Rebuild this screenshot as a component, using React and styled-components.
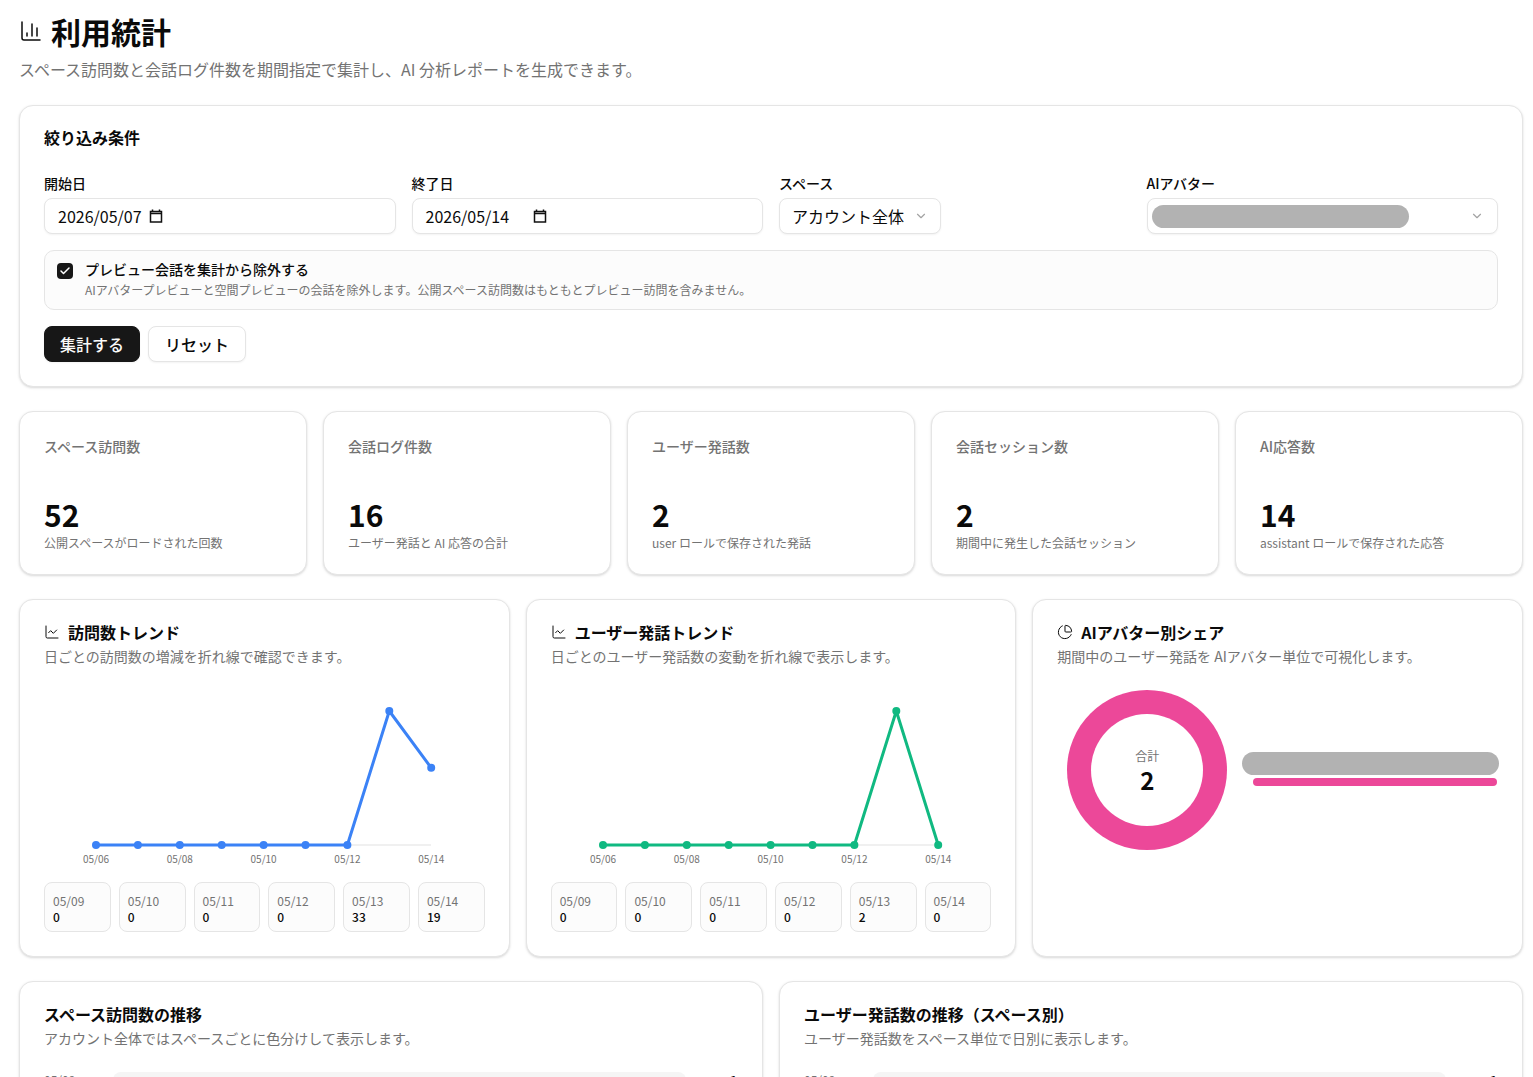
import React from 'react';
import styled, { createGlobalStyle } from 'styled-components';
import { ChartColumn, ChartLine, ChartPie, ChevronDown, Check } from 'lucide-react';

const GlobalStyle = createGlobalStyle`
  html, body {
    margin: 0;
    padding: 0;
    background: #fff;
    color: #0a0a0a;
    font-family: "Noto Sans CJK JP", "Noto Sans", sans-serif;
  }
  * { box-sizing: border-box; }
`;

const Page = styled.div`
  width: 1533px;
  height: 1077px;
  overflow: hidden;
  padding: 0 10px 0 19px;
`;

const TitleRow = styled.div`
  display: flex;
  align-items: center;
  gap: 8px;
  padding-top: 10px;
  height: 52px;
`;

const Title = styled.h1`
  margin: 0;
  font-size: 30px;
  line-height: 40px;
  font-weight: 700;
  color: #0a0a0a;
`;

const Lead = styled.p`
  margin: 7px 0 0;
  font-size: 16px;
  line-height: 20px;
  color: #737373;
`;

const Card = styled.section`
  background: #fff;
  border: 1px solid #e5e5e5;
  border-radius: 14px;
  box-shadow: 0 1px 3px rgba(0, 0, 0, 0.1), 0 1px 2px rgba(0, 0, 0, 0.06);
`;

const FilterCard = styled(Card)`
  margin-top: 26px;
  height: 282px;
  padding: 21px 24px;
`;

const CardHeading = styled.h2`
  margin: 0;
  font-size: 16px;
  line-height: 20px;
  font-weight: 700;
`;

const FieldGrid = styled.div`
  display: grid;
  grid-template-columns: repeat(4, minmax(0, 1fr));
  gap: 16px;
  margin-top: 26px;
`;

const Field = styled.div`
  display: flex;
  flex-direction: column;
  align-items: flex-start;
  gap: 5px;
`;

const FieldLabel = styled.label`
  font-size: 14px;
  line-height: 20px;
  font-weight: 500;
`;

const Control = styled.div`
  display: flex;
  align-items: center;
  width: ${(p) => p.$width || '100%'};
  height: 36px;
  padding: ${(p) => p.$padding || '0 13px'};
  border: 1px solid #e5e5e5;
  border-radius: 8px;
  background: #fff;
  box-shadow: 0 1px 2px rgba(0, 0, 0, 0.05);
  font-size: 16px;
  justify-content: ${(p) => p.$between ? 'space-between' : 'flex-start'};
`;

const DateText = styled.span`
  width: ${(p) => p.$width};
`;

const Redacted = styled.div`
  height: ${(p) => p.$height};
  width: ${(p) => p.$width};
  background: #b2b2b2;
  border-radius: 999px;
`;

const PreviewBox = styled.div`
  display: flex;
  align-items: flex-start;
  gap: 12px;
  height: 60px;
  margin-top: 16px;
  padding: 8px 12px;
  background: #fcfcfc;
  border: 1px solid #e5e5e5;
  border-radius: 10px;
`;

const CheckBox = styled.span`
  display: flex;
  align-items: center;
  justify-content: center;
  flex: none;
  width: 16px;
  height: 16px;
  margin-top: 4px;
  border-radius: 4px;
  background: #171717;
  color: #fff;
`;

const PreviewTitle = styled.div`
  font-size: 14px;
  line-height: 20px;
  font-weight: 500;
`;

const PreviewNote = styled.div`
  margin-top: 2px;
  font-size: 12px;
  line-height: 18px;
  color: #737373;
`;

const ButtonRow = styled.div`
  display: flex;
  gap: 8px;
  margin-top: 16px;
`;

const Button = styled.button`
  height: 36px;
  padding: 0 ${(p) => p.$primary ? '15px' : '16px'};
  border: 1px solid ${(p) => p.$primary ? '#171717' : '#e5e5e5'};
  border-radius: 8px;
  background: ${(p) => p.$primary ? '#171717' : '#fff'};
  color: ${(p) => p.$primary ? '#fafafa' : '#0a0a0a'};
  font-family: inherit;
  font-size: 16px;
  font-weight: 500;
  box-shadow: 0 1px 2px rgba(0, 0, 0, 0.05);
`;

const StatGrid = styled.div`
  display: grid;
  grid-template-columns: repeat(5, minmax(0, 1fr));
  gap: 16px;
  margin-top: 24px;
`;

const StatCard = styled(Card)`
  height: 164px;
  padding: 24px 24px;
`;

const StatLabel = styled.div`
  font-size: 14px;
  line-height: 20px;
  font-weight: 500;
  color: #737373;
`;

const StatValue = styled.div`
  margin-top: 38px;
  font-size: 30px;
  line-height: 40px;
  font-weight: 700;
`;

const StatNote = styled.div`
  margin-top: 1px;
  font-size: 12px;
  line-height: 16px;
  color: #737373;
`;

const ChartGrid = styled.div`
  display: grid;
  grid-template-columns: repeat(3, minmax(0, 1fr));
  gap: 16px;
  margin-top: 24px;
`;

const ChartCard = styled(Card)`
  height: 358px;
  padding: 22px 24px;
`;

const ChartHeading = styled.div`
  display: flex;
  align-items: center;
  gap: 8px;
  font-size: 16px;
  line-height: 20px;
  font-weight: 700;
`;

const ChartNote = styled.p`
  margin: 4px 0 0;
  font-size: 14px;
  line-height: 20px;
  color: #737373;
`;

const ChartBox = styled.div`
  margin-top: 9px;
  height: 194px;
`;

const DayGrid = styled.div`
  display: grid;
  grid-template-columns: repeat(6, minmax(0, 1fr));
  gap: 8px;
  margin-top: 13px;
`;

const DayCell = styled.div`
  height: 50px;
  padding: 10px 8px 0;
  background: #fcfcfc;
  border: 1px solid #e5e5e5;
  border-radius: 8px;
  font-size: 12px;
  line-height: 16px;
`;

const DayDate = styled.div`
  color: #737373;
`;

const DayCount = styled.div`
  font-weight: 500;
`;

const ShareRow = styled.div`
  display: flex;
  align-items: center;
  gap: 15px;
  margin-top: 24px;
  padding-left: 10px;
`;

const Donut = styled.div`
  position: relative;
  flex: none;
  width: 160px;
  height: 160px;
  border-radius: 50%;
  background: #ec4899;
`;

const DonutHole = styled.div`
  position: absolute;
  inset: 24px;
  display: flex;
  flex-direction: column;
  align-items: center;
  justify-content: center;
  border-radius: 50%;
  background: #fff;
  padding-top: 4px;
`;

const DonutLabel = styled.div`
  font-size: 12px;
  line-height: 16px;
  color: #737373;
`;

const DonutValue = styled.div`
  font-size: 24px;
  line-height: 32px;
  font-weight: 700;
`;

const Legend = styled.div`
  display: flex;
  flex-direction: column;
  align-items: flex-start;
  gap: 3px;
  flex: 1;
  margin-top: -3px;
`;

const LegendBar = styled.div`
  width: 244px;
  height: 8px;
  border-radius: 999px;
  background: #ec4899;
  margin-left: 11px;
`;

const WideGrid = styled.div`
  display: grid;
  grid-template-columns: repeat(2, minmax(0, 1fr));
  gap: 16px;
  margin-top: 24px;
`;

const WideCard = styled(Card)`
  height: 300px;
  padding: 22px 24px;
`;

const WideHeading = styled.h3`
  margin: 0;
  font-size: 16px;
  line-height: 20px;
  font-weight: 700;
`;

const BarRow = styled.div`
  display: flex;
  align-items: center;
  justify-content: space-between;
  margin-top: 24px;
  font-size: 12px;
  line-height: 16px;
`;

const BarDate = styled.span`
  width: 69px;
  color: #737373;
`;

const BarTrack = styled.div`
  flex: 1;
  height: 16px;
  background: #f5f5f5;
  border-radius: 8px;
`;

const BarCount = styled.span`
  width: 52px;
  text-align: right;
  padding-right: 1px;
  font-weight: 600;
`;

const stats = [
  { label: 'スペース訪問数', value: '52', note: '公開スペースがロードされた回数' },
  { label: '会話ログ件数', value: '16', note: 'ユーザー発話と AI 応答の合計' },
  { label: 'ユーザー発話数', value: '2', note: 'user ロールで保存された発話' },
  { label: '会話セッション数', value: '2', note: '期間中に発生した会話セッション' },
  { label: 'AI応答数', value: '14', note: 'assistant ロールで保存された応答' },
];

const visitPoints = [0, 0, 0, 0, 0, 0, 0, 33, 19];
const talkPoints = [0, 0, 0, 0, 0, 0, 0, 2, 0];
const axisDates = ['05/06', '05/08', '05/10', '05/12', '05/14'];

const TrendChart = ({ points, color }) => {
  const max = Math.max(...points);
  const coords = points.map((v, i) => [52 + i * 41.9, 170 - (v / max) * 134]);
  return (
    <svg width="440" height="194" viewBox="0 0 440 194">
      <line x1="52" y1="170" x2="387" y2="170" stroke="#f0f0f0" strokeWidth="2" />
      <polyline
        points={coords.map((c) => c.join(',')).join(' ')}
        fill="none"
        stroke={color}
        strokeWidth="3"
        strokeLinejoin="round"
      />
      {coords.map((c, i) => <circle key={i} cx={c[0]} cy={c[1]} r="4" fill={color} />)}
      {axisDates.map((d, i) => (
        <text key={d} x={52 + i * 83.8} y="188" fontSize="10" fill="#737373" textAnchor="middle">{d}</text>
      ))}
    </svg>
  );
};

const CalendarGlyph = () => (
  <svg width="14" height="14" viewBox="0 0 14 14">
    <path d="M3.5 0.5v2.5M10.5 0.5v2.5M1.5 2.5h11v10.5h-11zM1.5 4.5h11" fill="none" stroke="#111" strokeWidth="1.5" />
  </svg>
);

const dayRows = [
  [['05/09', 0], ['05/10', 0], ['05/11', 0], ['05/12', 0], ['05/13', 33], ['05/14', 19]],
  [['05/09', 0], ['05/10', 0], ['05/11', 0], ['05/12', 0], ['05/13', 2], ['05/14', 0]],
];

const Days = ({ rows }) => (
  <DayGrid>
    {rows.map(([date, count]) => (
      <DayCell key={date}>
        <DayDate>{date}</DayDate>
        <DayCount>{count}</DayCount>
      </DayCell>
    ))}
  </DayGrid>
);

export default function App() {
  return (
    <Page>
      <GlobalStyle />
      <TitleRow>
        <ChartColumn size={24} strokeWidth={1.5} />
        <Title>利用統計</Title>
      </TitleRow>
      <Lead>スペース訪問数と会話ログ件数を期間指定で集計し、AI 分析レポートを生成できます。</Lead>

      <FilterCard>
        <CardHeading>絞り込み条件</CardHeading>
        <FieldGrid>
          <Field>
            <FieldLabel>開始日</FieldLabel>
            <Control>
              <DateText $width="91px">2026/05/07</DateText>
              <CalendarGlyph />
            </Control>
          </Field>
          <Field>
            <FieldLabel>終了日</FieldLabel>
            <Control>
              <DateText $width="107px">2026/05/14</DateText>
              <CalendarGlyph />
            </Control>
          </Field>
          <Field>
            <FieldLabel>スペース</FieldLabel>
            <Control $width="162px" $padding="0 12px" $between>
              <span>アカウント全体</span>
              <ChevronDown size={14} color="#a3a3a3" />
            </Control>
          </Field>
          <Field>
            <FieldLabel>AIアバター</FieldLabel>
            <Control $padding="0 13px 0 4px" $between>
              <Redacted $width="257px" $height="23px" />
              <ChevronDown size={14} color="#a3a3a3" />
            </Control>
          </Field>
        </FieldGrid>
        <PreviewBox>
          <CheckBox><Check size={12} strokeWidth={3} /></CheckBox>
          <div>
            <PreviewTitle>プレビュー会話を集計から除外する</PreviewTitle>
            <PreviewNote>AIアバタープレビューと空間プレビューの会話を除外します。公開スペース訪問数はもともとプレビュー訪問を含みません。</PreviewNote>
          </div>
        </PreviewBox>
        <ButtonRow>
          <Button $primary>集計する</Button>
          <Button>リセット</Button>
        </ButtonRow>
      </FilterCard>

      <StatGrid>
        {stats.map((s) => (
          <StatCard key={s.label}>
            <StatLabel>{s.label}</StatLabel>
            <StatValue>{s.value}</StatValue>
            <StatNote>{s.note}</StatNote>
          </StatCard>
        ))}
      </StatGrid>

      <ChartGrid>
        <ChartCard>
          <ChartHeading><ChartLine size={16} strokeWidth={1.5} />訪問数トレンド</ChartHeading>
          <ChartNote>日ごとの訪問数の増減を折れ線で確認できます。</ChartNote>
          <ChartBox><TrendChart points={visitPoints} color="#3b82f6" /></ChartBox>
          <Days rows={dayRows[0]} />
        </ChartCard>
        <ChartCard>
          <ChartHeading><ChartLine size={16} strokeWidth={1.5} />ユーザー発話トレンド</ChartHeading>
          <ChartNote>日ごとのユーザー発話数の変動を折れ線で表示します。</ChartNote>
          <ChartBox><TrendChart points={talkPoints} color="#10b981" /></ChartBox>
          <Days rows={dayRows[1]} />
        </ChartCard>
        <ChartCard>
          <ChartHeading><ChartPie size={16} strokeWidth={1.5} />AIアバター別シェア</ChartHeading>
          <ChartNote>期間中のユーザー発話を AIアバター単位で可視化します。</ChartNote>
          <ShareRow>
            <Donut>
              <DonutHole>
                <DonutLabel>合計</DonutLabel>
                <DonutValue>2</DonutValue>
              </DonutHole>
            </Donut>
            <Legend>
              <Redacted $width="257px" $height="23px" />
              <LegendBar />
            </Legend>
          </ShareRow>
        </ChartCard>
      </ChartGrid>

      <WideGrid>
        <WideCard>
          <WideHeading>スペース訪問数の推移</WideHeading>
          <ChartNote>アカウント全体ではスペースごとに色分けして表示します。</ChartNote>
          <BarRow><BarDate>05/09</BarDate><BarTrack /><BarCount>1</BarCount></BarRow>
        </WideCard>
        <WideCard>
          <WideHeading>ユーザー発話数の推移（スペース別）</WideHeading>
          <ChartNote>ユーザー発話数をスペース単位で日別に表示します。</ChartNote>
          <BarRow><BarDate>05/09</BarDate><BarTrack /><BarCount>1</BarCount></BarRow>
        </WideCard>
      </WideGrid>
    </Page>
  );
}
